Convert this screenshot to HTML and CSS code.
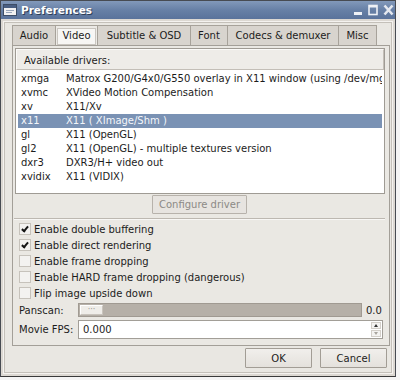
FILE: index.html
```html
<!DOCTYPE html>
<html lang="en">
<head>
  <meta charset="UTF-8" />
  <title>Preferences</title>
  <link rel="stylesheet" href="styles.css">
</head>
<body>
  <div class="window">
    <div class="titlebar">
      <svg class="app-icon" width="14" height="12" viewBox="0 0 14 12">
        <rect x="0.5" y="0.5" width="13" height="11" fill="#f2f2f2" stroke="#3d4d66"/>
        <rect x="1" y="1" width="12" height="3" fill="#4a5f82"/>
        <rect x="3" y="6" width="8" height="1" fill="#9aa7bb"/>
        <rect x="3" y="8" width="6" height="1" fill="#9aa7bb"/>
      </svg>
      <span class="title">Preferences</span>
      <div class="wm-buttons">
        <svg width="10" height="12" viewBox="0 0 10 12"><rect x="1" y="8" width="8" height="3" fill="#eef1f6"/></svg>
        <svg width="10" height="12" viewBox="0 0 10 12"><rect x="1" y="1.5" width="8" height="9" fill="none" stroke="#eef1f6" stroke-width="1.6"/><rect x="1" y="1" width="8" height="2.5" fill="#eef1f6"/></svg>
        <svg width="11" height="12" viewBox="0 0 11 12"><path d="M1.5 1.5 L9.5 10.5 M9.5 1.5 L1.5 10.5" stroke="#e4e8ef" stroke-width="2.6"/></svg>
      </div>
    </div>

    <div class="client">
      <div class="tabs">
        <div class="tab tab-audio">Audio</div>
        <div class="tab tab-video active"><span>Video</span></div>
        <div class="tab tab-sub">Subtitle &amp; OSD</div>
        <div class="tab tab-font">Font</div>
        <div class="tab tab-codecs">Codecs &amp; demuxer</div>
        <div class="tab tab-misc">Misc</div>
      </div>

      <div class="panel">
        <div class="frame drivers">
          <div class="list">
            <div class="list-header">Available drivers:</div>
            <div class="list-body">
              <div class="row"><span class="c1">xmga</span><span class="c2">Matrox G200/G4x0/G550 overlay in X11 window (using /dev/mg</span></div>
              <div class="row"><span class="c1">xvmc</span><span class="c2">XVideo Motion Compensation</span></div>
              <div class="row"><span class="c1">xv</span><span class="c2">X11/Xv</span></div>
              <div class="row selected"><span class="c1">x11</span><span class="c2">X11 ( XImage/Shm )</span></div>
              <div class="row"><span class="c1">gl</span><span class="c2">X11 (OpenGL)</span></div>
              <div class="row"><span class="c1">gl2</span><span class="c2">X11 (OpenGL) - multiple textures version</span></div>
              <div class="row"><span class="c1">dxr3</span><span class="c2">DXR3/H+ video out</span></div>
              <div class="row"><span class="c1">xvidix</span><span class="c2">X11 (VIDIX)</span></div>
            </div>
          </div>
          <div class="configure-row">
            <button class="btn configure" disabled>Configure driver</button>
          </div>
        </div>

        <div class="frame options">
          <div class="check"><span class="box checked"></span>Enable double buffering</div>
          <div class="check"><span class="box checked"></span>Enable direct rendering</div>
          <div class="check"><span class="box"></span>Enable frame dropping</div>
          <div class="check"><span class="box"></span>Enable HARD frame dropping (dangerous)</div>
          <div class="check"><span class="box"></span>Flip image upside down</div>

          <div class="field panscan">
            <span class="field-label">Panscan:</span>
            <div class="slider"><div class="thumb">···</div></div>
            <span class="value">0.0</span>
          </div>

          <div class="field fps">
            <span class="field-label">Movie FPS:</span>
            <div class="spin">
              <span class="spin-text">0.000</span>
              <div class="arrows">
                <span class="arrow up"></span>
                <span class="arrow down"></span>
              </div>
            </div>
          </div>
        </div>
      </div>

      <div class="actions">
        <button class="btn ok">OK</button>
        <button class="btn cancel">Cancel</button>
      </div>
    </div>
  </div>
</body>
</html>
```

FILE: styles.css
```css
body {
  margin: 0;
  background: #f4f4f4;
  font-family: 'DejaVu Sans', sans-serif;
  font-size: 10px;
  color: #1c1c1c;
}
.window {
  width: 396px;
  height: 377px;
  box-sizing: border-box;
  border: 1px solid #474b52;
  border-bottom-color: #3a3a3a;
  display: flex;
  flex-direction: column;
  background: #e9e7e2;
}
.titlebar {
  height: 18px;
  display: flex;
  align-items: center;
  background: linear-gradient(#8299ba, #6780a6 50%, #5a739b);
  padding-left: 2px;
}
.app-icon {
  margin-right: 4px;
}
.title {
  color: #fff;
  font-weight: bold;
  font-size: 10.5px;
  text-shadow: 1px 1px 0 #2e3d57;
  flex: 1;
}
.wm-buttons {
  display: flex;
  gap: 5px;
  padding-right: 1px;
}
.wm-buttons svg {
  display: block;
}
.client {
  flex: 1;
  display: flex;
  flex-direction: column;
  padding: 6px 5px 0 11px;
  box-shadow: inset 0 0 0 2px #dcd8d2, inset 0 0 0 3px #f4f2ef, inset 0 0 0 4px #c4c0b9;
}

/* tabs */
.tabs {
  display: flex;
  height: 20px;
}
.tab {
  box-sizing: border-box;
  height: 20px;
  line-height: 19px;
  text-align: center;
  background: #d8d4ce;
  border: 1px solid #a7a29a;
  border-bottom: none;
  border-left: none;
}
.tab-audio { width: 44px; border-left: 1px solid #a7a29a; }
.tab-video { width: 42px; }
.tab-sub { width: 93px; }
.tab-font { width: 37px; }
.tab-codecs { width: 111px; }
.tab-misc { width: 38px; }
.tab.active {
  background: #eceae6;
  padding: 2px 1px 1px 1px;
  line-height: normal;
}
.tab.active span {
  display: block;
  height: 15px;
  line-height: 14px;
  border: 1px solid #c9c5bf;
  background: #f7f6f4;
}

/* panel */
.panel {
  height: 301px;
  box-sizing: border-box;
  border: 1px solid #a39f98;
  padding: 2px 4px 2px 1px;
  display: flex;
  flex-direction: column;
  background: #eae8e3;
}
.frame {
  box-sizing: border-box;
}
.drivers {
  height: 171px;
  border-bottom: 1px solid #bdb8b1;
  box-shadow: 0 1px 0 #f8f7f5;
}
.list {
  height: 146px;
  box-sizing: border-box;
  border: 1px solid #9f9b94;
  margin-left: 1px;
  background: #fff;
  overflow: hidden;
}
.list-header {
  height: 21px;
  box-sizing: border-box;
  line-height: 21px;
  padding-left: 7px;
  background: #eeece8;
  border: 1px solid #fbfaf8;
  border-bottom-color: #c3beb7;
  border-right-color: #c3beb7;
}
.list-body {
  padding: 2px 2px 0 2px;
}
.row {
  height: 14px;
  line-height: 14px;
  display: flex;
  white-space: nowrap;
  overflow: hidden;
}
.row.selected {
  background: #7a92b4;
  color: #f4f6fa;
}
.c1 {
  width: 45px;
  padding-left: 3px;
  flex-shrink: 0;
}
.configure-row {
  display: flex;
  justify-content: center;
  padding-top: 1px;
}
.btn {
  font-family: 'DejaVu Sans', sans-serif;
  font-size: 10px;
  color: #1c1c1c;
  background: linear-gradient(#f1efec, #e4e1dc);
  border: 1px solid #a29d95;
  border-radius: 1px;
  padding: 0;
  height: 20px;
}
.btn.configure {
  width: 95px;
  height: 19px;
  color: #8c8a86;
  background: #e7e4e0;
  border-color: #b7b2ab;
}

/* options */
.options {
  flex: 1;
  padding: 2px 0 0 5px;
}
.check {
  height: 16px;
  display: flex;
  align-items: center;
  gap: 3px;
}
.box {
  width: 10px;
  height: 10px;
  border: 1px solid #c6c2bb;
  background: #f3f2f0;
  position: relative;
}
.box.checked::after {
  content: '';
  position: absolute;
  left: 3px;
  top: 1px;
  width: 2px;
  height: 5px;
  border: solid #151515;
  border-width: 0 2px 2px 0;
  transform: rotate(40deg);
}
.field {
  display: flex;
  align-items: center;
}
.field-label {
  width: 59px;
  flex-shrink: 0;
}
.panscan {
  height: 18px;
}
.slider {
  width: 284px;
  height: 14px;
  box-sizing: border-box;
  background: #b6b0a8;
  border: 1px solid #a09a92;
  padding: 1px;
}
.thumb {
  width: 23px;
  height: 10px;
  box-sizing: border-box;
  background: #efede9;
  border: 1px solid #fff;
  border-right-color: #c9c4bd;
  border-bottom-color: #c9c4bd;
  color: #9a968f;
  font-size: 8px;
  line-height: 7px;
  text-align: center;
}
.value {
  margin-left: 4px;
}
.fps {
  height: 19px;
  margin-top: 1px;
}
.spin {
  width: 305px;
  height: 19px;
  box-sizing: border-box;
  border: 1px solid #a29e97;
  background: #fff;
  display: flex;
  align-items: center;
  padding-left: 4px;
}
.spin-text {
  flex: 1;
}
.arrows {
  width: 10px;
  margin-right: 1px;
  display: flex;
  flex-direction: column;
  gap: 1px;
}
.arrow {
  height: 7px;
  box-sizing: border-box;
  border: 1px solid #d3cfc9;
  background: #f4f3f1;
  position: relative;
}
.arrow::after {
  content: '';
  position: absolute;
  left: 2px;
  border-left: 2px solid transparent;
  border-right: 2px solid transparent;
}
.arrow.up::after {
  top: 1px;
  border-bottom: 3px solid #333;
}
.arrow.down::after {
  top: 1px;
  border-top: 3px solid #a8a49e;
}

/* dialog buttons */
.actions {
  display: flex;
  justify-content: flex-end;
  gap: 8px;
  margin-top: 2px;
  padding-right: 3px;
}
.btn.ok,
.btn.cancel {
  width: 67px;
}
```
